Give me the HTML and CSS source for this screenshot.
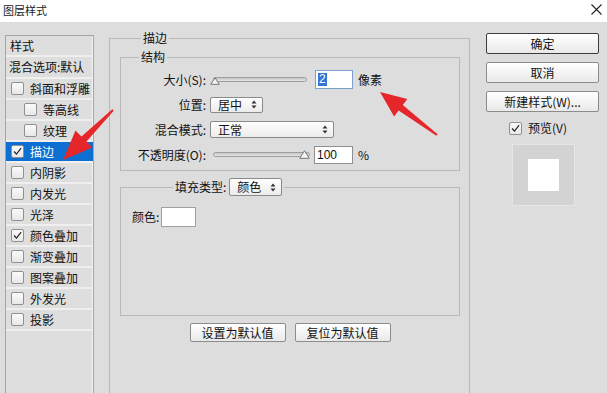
FILE: index.html
```html
<!DOCTYPE html>
<html lang="zh-CN">
<head>
<meta charset="utf-8">
<title>图层样式</title>
<link rel="stylesheet" href="styles.css">
</head>
<body>
<div class="window">
  <div class="titlebar">
    <span class="title">图层样式</span>
    <svg class="close" width="11" height="11" viewBox="0 0 11 11"><path d="M0.5 0.5 L10.5 10.5 M10.5 0.5 L0.5 10.5" stroke="#222" stroke-width="1.1" fill="none"/></svg>
  </div>
  <div class="content">
    <div class="sidebar">
      <div class="row head">样式</div>
      <div class="row head tall">混合选项:默认</div>
      <div class="row"><span class="cb"></span>斜面和浮雕</div>
      <div class="row sub"><span class="cb"></span>等高线</div>
      <div class="row sub"><span class="cb"></span>纹理</div>
      <div class="row selected"><span class="cb"><svg viewBox="0 0 13 13"><path d="M2.5 6.5 L5.3 9.6 L10.8 2.6" stroke="#222" stroke-width="1.4" fill="none"/></svg></span>描边</div>
      <div class="row"><span class="cb"></span>内阴影</div>
      <div class="row"><span class="cb"></span>内发光</div>
      <div class="row"><span class="cb"></span>光泽</div>
      <div class="row"><span class="cb"><svg viewBox="0 0 13 13"><path d="M2.5 6.5 L5.3 9.6 L10.8 2.6" stroke="#222" stroke-width="1.4" fill="none"/></svg></span>颜色叠加</div>
      <div class="row"><span class="cb"></span>渐变叠加</div>
      <div class="row"><span class="cb"></span>图案叠加</div>
      <div class="row"><span class="cb"></span>外发光</div>
      <div class="row"><span class="cb"></span>投影</div>
    </div>

    <fieldset class="group stroke">
      <legend>描边</legend>
      <fieldset class="group struct">
        <legend>结构</legend>
        <div class="form">
          <label>大小(S):</label>
          <div class="ctl">
            <div class="slider s-size"><div class="track"></div><svg class="thumb" style="left:0px" width="10" height="8" viewBox="0 0 10 8"><path d="M5 0.7 L9.3 7.3 L0.7 7.3 Z" fill="#f4f4f4" stroke="#777" stroke-width="1"/></svg></div>
            <div class="num focus"><span class="sel">2</span></div>
            <span class="unit">像素</span>
          </div>
          <label>位置:</label>
          <div class="ctl"><div class="select w-pos"><span>居中</span><svg class="arr" width="6" height="9" viewBox="0 0 6 9"><path d="M3 0.5 L5.5 3.5 L0.5 3.5 Z M3 8.5 L5.5 5.5 L0.5 5.5 Z" fill="#333"/></svg></div></div>
          <label>混合模式:</label>
          <div class="ctl"><div class="select w-mode"><span>正常</span><svg class="arr" width="6" height="9" viewBox="0 0 6 9"><path d="M3 0.5 L5.5 3.5 L0.5 3.5 Z M3 8.5 L5.5 5.5 L0.5 5.5 Z" fill="#333"/></svg></div></div>
          <label>不透明度(O):</label>
          <div class="ctl">
            <div class="slider s-op"><div class="track"></div><svg class="thumb" style="left:89px" width="11" height="9" viewBox="0 0 11 9"><path d="M5.5 0.7 L10.3 8.3 L0.7 8.3 Z" fill="#f4f4f4" stroke="#777" stroke-width="1"/></svg></div>
            <div class="num op"><span>100</span></div>
            <span class="unit">%</span>
          </div>
        </div>
      </fieldset>

      <fieldset class="group fill">
        <legend><span class="flabel">填充类型:</span><div class="select w-fill"><span>颜色</span><svg class="arr" width="6" height="9" viewBox="0 0 6 9"><path d="M3 0.5 L5.5 3.5 L0.5 3.5 Z M3 8.5 L5.5 5.5 L0.5 5.5 Z" fill="#333"/></svg></div></legend>
        <div class="color-row"><span>颜色:</span><span class="swatch"></span></div>
      </fieldset>

      <div class="defaults">
        <button class="btn b-def">设置为默认值</button>
        <button class="btn b-def">复位为默认值</button>
      </div>
    </fieldset>

    <div class="actions">
      <button class="btn act primary">确定</button>
      <button class="btn act">取消</button>
      <button class="btn act">新建样式(W)...</button>
      <div class="preview-check"><span class="cb"><svg viewBox="0 0 13 13"><path d="M2.5 6.5 L5.3 9.6 L10.8 2.6" stroke="#222" stroke-width="1.4" fill="none"/></svg></span>预览(V)</div>
      <div class="preview"><div class="swatch-big"></div></div>
    </div>
  </div>

  <svg class="arrows" width="607" height="393" viewBox="0 0 607 393">
    <polygon fill="#e5262b" points="113.7,110.7 86.5,141.5 92.5,147.5 63,160 75.5,130.5 81.5,136.5 112.3,109.3"/>
    <polygon fill="#e5262b" points="437.6,134.2 402.8,104.9 407.3,98.9 380,92 394.1,116.5 398.6,110.5 436.4,135.8"/>
  </svg>
</div>
</body>
</html>
```

FILE: styles.css
```css
* { box-sizing: border-box; }

body {
  margin: 0;
  width: 607px;
  height: 393px;
  overflow: hidden;
  background: #dddddd;
  font-family: "Noto Sans CJK SC", "Microsoft YaHei", sans-serif;
  font-size: 12px;
  line-height: 14px;
  color: #111;
}

.window {
  position: relative;
  width: 607px;
  height: 393px;
  overflow: hidden;
}

.titlebar {
  height: 22px;
  background: #ffffff;
  display: flex;
  align-items: center;
  justify-content: space-between;
  padding: 0 5px 2px 3px;
}

.title { font-size: 11px; color: #222; }
.close { margin-top: -2px; }

.content {
  display: flex;
  align-items: flex-start;
  height: 371px;
  padding-left: 5px;
}

/* ---------- sidebar ---------- */
.sidebar {
  width: 89px;
  height: 380px;
  margin-top: 13px;
  border: 1px solid #a5a5a5;
  box-shadow: inset -1px 0 0 #f2f2f2;
  background: #dedede;
}

.row {
  display: flex;
  align-items: center;
  height: 21px;
  border-bottom: 2px solid #efefef;
  padding-left: 5px;
  gap: 6px;
  font-size: 12px;
}

.row.head { padding-left: 4px; }
.row.tall { height: 22px; padding-left: 3px; }
.row.sub { padding-left: 18px; }

.row.selected {
  background: #0d6fd2;
  color: #ffffff;
}

.cb {
  width: 13px;
  height: 13px;
  flex: none;
  border: 1px solid #909090;
  border-radius: 2px;
  background: linear-gradient(#fafafa, #e8e8e8);
  display: inline-flex;
}

.cb svg { width: 11px; height: 11px; }

/* ---------- group boxes ---------- */
.group {
  margin: 0;
  border: 1px solid #b9b9b9;
  min-width: 0;
}

.group > legend {
  padding: 0 2px;
  line-height: 14px;
  font-size: 12px;
}

.stroke {
  width: 361px;
  height: 380px;
  margin: 9px 0 0 15px;
  padding: 0 9px 0 10px;
}

.stroke > legend { margin-left: 21px; }

.struct {
  margin-top: 5px;
  padding: 3px 0 3px 0;
}

.struct > legend { margin-left: 18px; }

.form {
  display: grid;
  grid-template-columns: 85px 1fr;
  grid-auto-rows: 25px;
  column-gap: 4px;
  align-items: center;
}

.form label { text-align: right; white-space: nowrap; }

.ctl {
  display: flex;
  align-items: center;
}

.slider {
  position: relative;
  height: 12px;
  display: flex;
  align-items: center;
}

.s-size { width: 97px; }
.s-op { width: 100px; }

.track {
  width: 100%;
  height: 5px;
  margin-left: 3px;
  border: 1px solid #9e9e9e;
  border-radius: 3px;
  background: linear-gradient(#c4c4c4, #e6e6e6);
}

.thumb {
  position: absolute;
  top: 3px;
}

.s-op .thumb { top: 1px; }

.num {
  height: 19px;
  width: 38px;
  border: 1px solid #8f8f8f;
  background: #ffffff;
  display: flex;
  align-items: center;
  padding-left: 2px;
  font-family: "Liberation Sans", Arial, sans-serif;
  font-size: 12px;
}

.s-size + .num { margin-left: 8px; }
.num.focus { border-color: #7b9fcf; }
.num.op { margin-left: 4px; width: 39px; height: 18px; }

.sel {
  background: #3276d2;
  color: #fff;
  padding: 0 1px;
  line-height: 13px;
}

.unit { margin-left: 5px; }

.select {
  position: relative;
  height: 17px;
  border: 1px solid #8a8a8a;
  border-radius: 2px;
  background: linear-gradient(#fefefe, #ececec);
  display: flex;
  align-items: center;
  justify-content: space-between;
  padding: 0 5px 0 7px;
}

.w-pos { width: 53px; height: 16px; }
.w-mode { width: 124px; }
.w-fill { width: 53px; height: 18px; }

/* ---------- fill ---------- */
.fill {
  margin-top: 7px;
  height: 138px;
  padding: 11px 0 0 11px;
}

.fill > legend {
  margin-left: 41px;
  display: flex;
  align-items: center;
  gap: 3px;
  padding: 0 2px;
}

.color-row {
  display: flex;
  align-items: center;
  gap: 2px;
}

.swatch {
  width: 35px;
  height: 20px;
  background: #ffffff;
  border: 1px solid #a0a0a0;
}

.defaults {
  display: flex;
  justify-content: center;
  gap: 9px;
  margin-top: 7px;
}

/* ---------- buttons ---------- */
.btn {
  font-family: "Noto Sans CJK SC", "Microsoft YaHei", sans-serif;
  font-size: 12px;
  line-height: 14px;
  color: #111;
  padding: 0;
  border: 1px solid #8c8c8c;
  border-radius: 2px;
  background: linear-gradient(#ffffff, #e9e9e9);
}

.b-def { width: 96px; height: 19px; }

.actions {
  display: flex;
  flex-direction: column;
  width: 113px;
  margin: 11px 0 0 16px;
  gap: 8px;
}

.act { height: 21px; width: 113px; }
.primary { border-color: #3c3c3c; }

.preview-check {
  display: flex;
  align-items: center;
  gap: 6px;
  margin: 1px 0 0 23px;
  height: 14px;
}

.preview {
  width: 63px;
  height: 62px;
  margin: 1px 0 0 26px;
  background: #d3d3d3;
  border: 1px solid #e6e6e6;
  display: flex;
  align-items: center;
  justify-content: center;
}

.swatch-big {
  width: 31px;
  height: 32px;
  background: #ffffff;
}

.arrows {
  position: absolute;
  left: 0;
  top: 0;
  pointer-events: none;
}
```
